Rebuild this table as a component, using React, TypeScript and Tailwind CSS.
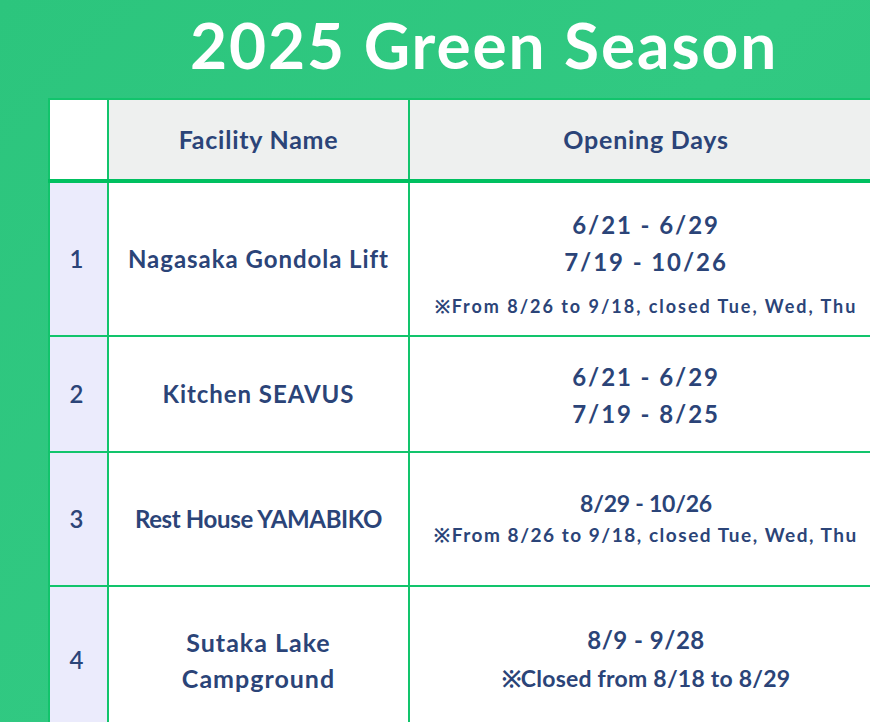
import React from 'react'

type Row = {
  no: number
  name: React.ReactNode
  nameClass: string
  dates: string[]
  dateClass: string
  note?: string
  noteClass?: string
  boxClass?: string
  height: string
}

const rows: Row[] = [
  {
    no: 1,
    name: 'Nagasaka Gondola Lift',
    nameClass: 'text-[24px] leading-[36px] tracking-[0.04em]',
    dates: ['6/21 - 6/29', '7/19 - 10/26'],
    dateClass: 'text-[24px] leading-[37px] tracking-[0.08em]',
    note: '※From 8/26 to 9/18, closed Tue, Wed, Thu',
    noteClass: 'mt-[13px] text-[18px] tracking-[0.11em]',
    boxClass: 'pt-[7px]',
    height: 'h-[155px]',
  },
  {
    no: 2,
    name: 'Kitchen SEAVUS',
    nameClass: 'text-[24px] leading-[36px] tracking-[0.04em]',
    dates: ['6/21 - 6/29', '7/19 - 8/25'],
    dateClass: 'text-[24px] leading-[37px] tracking-[0.08em]',
    boxClass: 'pt-[2px]',
    height: 'h-[116px]',
  },
  {
    no: 3,
    name: 'Rest House YAMABIKO',
    nameClass: 'text-[24px] leading-[36px] tracking-[-0.015em]',
    dates: ['8/29 - 10/26'],
    dateClass: 'text-[23px] leading-[30px] tracking-[-0.01em]',
    note: '※From 8/26 to 9/18, closed Tue, Wed, Thu',
    noteClass: 'mt-[3px] text-[19px] tracking-[0.08em]',
    height: 'h-[134px]',
  },
  {
    no: 4,
    name: (
      <>
        Sutaka Lake
        <br />
        Campground
      </>
    ),
    nameClass: 'text-[25px] leading-[36px] tracking-[0.04em]',
    dates: ['8/9 - 9/28'],
    dateClass: 'text-[24px] leading-[32px] tracking-[0.02em]',
    note: '※Closed from 8/18 to 8/29',
    noteClass: 'mt-[5px] text-[23px] tracking-[0.01em]',
    height: 'h-[148px]',
  },
]

const cell = 'border-2 border-[#12c46c]'

export default function App() {
  return (
    <div className="h-[722px] w-[870px] overflow-hidden bg-[linear-gradient(135deg,#2cc57d_0%,#31c982_50%,#2cc57d_100%)] font-['Lato',sans-serif] text-[#2b4478]">
      <h1 className="pt-[9px] pl-[190px] text-[64px] leading-[72px] font-bold tracking-[0.03em] whitespace-nowrap text-white">
        2025 Green Season
      </h1>

      <table className="mt-[17px] ml-[48px] w-[834px] table-fixed border-collapse bg-white">
        <colgroup>
          <col className="w-[59px]" />
          <col className="w-[301px]" />
          <col className="w-[474px]" />
        </colgroup>
        <thead>
          <tr className="h-[82px] border-b-[4px] border-[#00c060]">
            <th className={`${cell} bg-white`} />
            <th className={`${cell} bg-[#eef0ef] text-[25px] font-bold tracking-[0.03em]`}>
              Facility Name
            </th>
            <th className={`${cell} bg-[#eef0ef] text-[25px] font-bold tracking-[0.03em]`}>
              Opening Days
            </th>
          </tr>
        </thead>
        <tbody>
          {rows.map((r) => (
            <tr key={r.no} className={r.height}>
              <td className={`${cell} bg-[#ebebfc] pr-[4px] text-center text-[24px] font-semibold`}>
                {r.no}
              </td>
              <td className={`${cell} text-center`}>
                <span className={`inline-block font-bold ${r.nameClass}`}>{r.name}</span>
              </td>
              <td className={`${cell} text-center`}>
                <div className={`flex flex-col items-center ${r.boxClass ?? ''}`}>
                  {r.dates.map((d) => (
                    <span key={d} className={`font-bold ${r.dateClass}`}>
                      {d}
                    </span>
                  ))}
                  {r.note && (
                    <span className={`font-bold whitespace-nowrap ${r.noteClass}`}>{r.note}</span>
                  )}
                </div>
              </td>
            </tr>
          ))}
        </tbody>
      </table>
    </div>
  )
}
